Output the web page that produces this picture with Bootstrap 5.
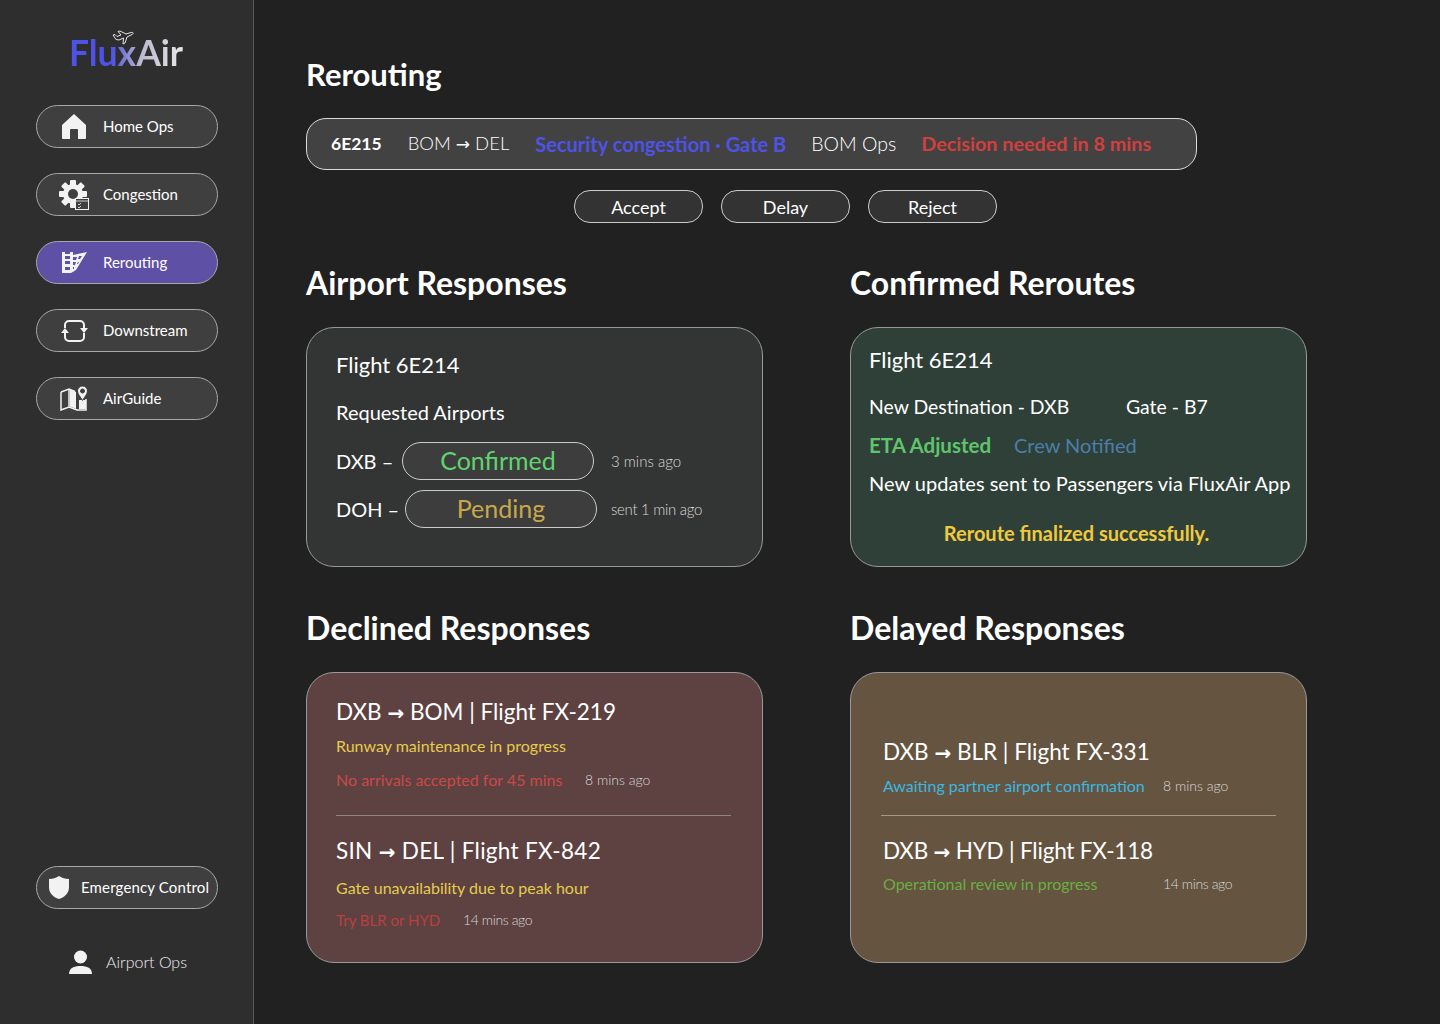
<!DOCTYPE html>
<html lang="en"><head><meta charset="utf-8"><title>FluxAir</title>
<link href="https://cdn.jsdelivr.net/npm/bootstrap@5.3.0/dist/css/bootstrap.min.css" rel="stylesheet">
<style>
html,body{height:100%}
body{background:#212121;color:#fff;font-family:"Lato","Liberation Sans",sans-serif}
.shell{height:1024px;overflow:hidden}
.side{width:254px;flex:none;background:#2e2e2e;border-right:1px solid #5a5a5a;height:1024px;padding:30px 35px 0 36px}
.logo{height:75px;position:relative;text-align:center;padding:1px 2px 0 0}
.logo-txt{font-size:35.5px;font-weight:700;line-height:44px;display:inline-block;background:linear-gradient(90deg,#4f52e6 0,#4f52e6 38%,#b9b7cc 62%,#e8e8e8 100%);-webkit-background-clip:text;background-clip:text;color:transparent}
.logo svg{position:absolute;left:76px;top:0}
.pill{height:43px;border:1px solid #a8a8a8;border-radius:22px;background:#3f3f3f;color:#fff;font-size:15px;text-decoration:none;display:flex;align-items:center;white-space:nowrap}
.pill.on{background:#5e50a4}
.ico{width:66px;padding-left:8px;display:flex;justify-content:center;flex:none}
.ico-sm{width:44px;padding-left:0}
.navs{display:flex;flex-direction:column;gap:25px}
.side-low{margin-top:446px}
.wide-txt{letter-spacing:.15px}
.who{margin-top:41px;font-size:16px;font-weight:300;color:#f0f0f0;padding-left:33px;gap:14px}
.mainp{padding:52px 0 0 52px;flex:1}
.h-a{font-size:32px;font-weight:700;line-height:44px;margin:0}
.h-top{font-size:31px}
.bar{margin-top:22px;width:891px;height:52px;border:1px solid #ddd;border-radius:20px;background:#424242;padding-left:24px;gap:26px}
.bar>*{white-space:nowrap}
.b-id{font-size:17.5px;font-weight:700}
.b-route{font-size:18.5px;font-weight:300;color:#fff}
.b-ops{font-size:19.5px;font-weight:300;margin-left:-1px}
.b-sec{font-size:20px;font-weight:700;color:#4f52e6}
.b-dec{font-size:19.8px;font-weight:700;color:#d13f3f;margin-left:-1px}
.acts{margin:20px 0 0 268px;gap:18px}
.act{width:129px;height:33px;padding:0;border:1px solid #ccc;border-radius:16px;background:#333;color:#fff;font-size:18px;line-height:30px}
.cols{display:grid;grid-template-columns:457px 457px;column-gap:87px}
.gap-h1{margin-top:38px}
.gap-h2{margin-top:39px}
.gap-c{margin-top:22px}
.panel{border:1px solid #999;border-radius:28px;box-sizing:border-box}
.p-gray{background:#333534;height:240px;padding:20px 29px}
.p-green{background:#2f4038;height:240px;padding:15px 18px}
.p-red{background:#5e4242;height:291px;padding:22px 29px 0}
.p-brown{background:#655440;height:291px;padding:62px 32px 0}
.t-lg{font-size:22.500px;line-height:34px;white-space:nowrap}
.t-flight{font-size:22px}
.t-wide{letter-spacing:.3px}
.t-narrow{letter-spacing:-.2px}
.arr{font-family:"DejaVu Sans",sans-serif;font-weight:700;font-size:20px;line-height:0}
.arr-thin{font-family:"DejaVu Sans",sans-serif;font-size:17px;font-weight:400;line-height:0}
.t-md{font-size:20px;line-height:28px;font-weight:400}
.t-nd{font-size:19.400px}
.t-eta{font-size:20.500px}
.t-sm{font-size:16px;line-height:22px;font-weight:400}
.t-try{font-size:15px}
.t-time{font-size:14px;line-height:22px;color:#d8d8d8;font-weight:300}
.t-tight{letter-spacing:-.4px}
.t-time-g{font-size:15px}
.st{height:38px;border:1px solid #ccc;border-radius:19px;background:#3d3d3d;width:192px;text-align:center;font-size:25px;line-height:35px}
.st-ok{color:#5fd46f}.st-pend{color:#c9a84a}
.lab-dxb{width:66px}.lab-doh{width:69px}
.row-a{margin-top:16px}.row-b{margin-top:10px}
.time-a{margin-left:17px}.time-b{margin-left:14px;letter-spacing:-.3px}
.g-1{margin-top:16px}.g-2{margin-top:10px}.g-3{margin-top:22px}
.w-dest{width:257px}.w-eta{width:145px}
.c-eta{color:#5fc46b}.c-crew{color:#4a7fa8}.c-final{color:#f0c93f;margin-left:-4px}
.c-yel{color:#e4cc4c}.c-red{color:#cc4848}.c-red2{color:#b84040}
.c-blue{color:#3bb8e0}.c-grn{color:#6aae45}
.w-no{width:249px}.w-try{width:127px}.w-del{width:280px}
.s-5{margin-top:5px}.s-6{margin-top:6px}.s-7{margin-top:9px}.s-10{margin-top:10px}.s-12{margin-top:12px}
.rule{height:1px;background:#8a8a78;border:0;opacity:1;width:395px}
.rule-r{margin:24px 0 18px}
.rule-b{margin:18px 0 18px -2px;background:#a09a88}
</style></head>
<body>
<div class="d-flex shell">
<aside class="side">
 <div class="logo">
  <span class="logo-txt">FluxAir</span>
  <svg width="22" height="16" viewBox="0 0 22 16" fill="none" stroke="#e4e4e4" stroke-width="1" stroke-linejoin="round"><path d="M1 5l2-.5 2 2 4-1.500L6 1.500 8 1l6 3 5-1.500c2.500-.5 3 1 1 2l-5 2.500-2 6-2 1 .5-6-4.500 2-3-.5z"/></svg>
 </div>
 <nav class="navs">
  <a class="pill" href="#"><span class="ico"><svg width="24" height="25" viewBox="0 0 24 25" fill="#f2f2f2"><path d="M12 0L24 11V24a1 1 0 0 1-1 1H16V16a1 1 0 0 0-1-1H9a1 1 0 0 0-1 1v9H1a1 1 0 0 1-1-1V11z"/></svg></span>Home Ops</a>
  <a class="pill" href="#"><span class="ico"><svg width="30" height="30" viewBox="0 0 30 30"><g fill="#f2f2f2"><rect x="11" y="0" width="6" height="28" rx="1"/><rect x="0" y="11" width="28" height="6" rx="1"/><rect x="11" y="0" width="6" height="28" rx="1" transform="rotate(45 14 14)"/><rect x="11" y="0" width="6" height="28" rx="1" transform="rotate(-45 14 14)"/><circle cx="14" cy="14" r="10"/></g><circle cx="14" cy="14" r="5" fill="#3f3f3f"/><rect x="16.500" y="18.500" width="13" height="11" fill="#3f3f3f" stroke="#f2f2f2"/><path d="M17 21h12M19 24l1 1 2-2M19 27l1 1 2-2" stroke="#f2f2f2" fill="none" stroke-width=".8"/></svg></span>Congestion</a>
  <a class="pill on" href="#"><span class="ico"><svg width="25" height="21" viewBox="0 0 25 21"><path fill="#f2f2f2" d="M0 0h3v2h5V0h3v3l14-3-11 18-5 3H0z"/><path fill="#5e50a4" d="M3 4h5v3H3zM3 9h5v3H3zM3 15h5v3H3zM11 5h4l-1 3h-3zM17 4h3l-2 3h-2zM11 10h3l-1 3h-2zM16 10h1l-1 2h-1zM11 15h1v2h-1z"/></svg></span>Rerouting</a>
  <a class="pill" href="#"><span class="ico"><svg width="27" height="24" viewBox="0 0 27 24" fill="none" stroke="#f2f2f2" stroke-width="2"><path d="M4 9V6a4 4 0 0 1 4-4h11a4 4 0 0 1 4 4v4"/><path d="M23 14v4a4 4 0 0 1-4 4H8a4 4 0 0 1-4-4v-4"/><path fill="#f2f2f2" stroke="none" d="M19 9h8l-4 5zM0 14h8l-4-5z"/></svg></span>Downstream</a>
  <a class="pill" href="#"><span class="ico"><svg width="28" height="25" viewBox="0 0 28 25" fill="none" stroke="#f2f2f2" stroke-width="1.500"><path d="M1 6l8-3 6 2.500M1 6v18l8-3 8 3h9V13M9 3v18"/><path fill="#f2f2f2" d="M10 3.500l6 2.500v17l-6-2.500zM19 14h7v9h-7z" stroke="none"/><path fill="#f2f2f2" stroke="#3f3f3f" stroke-width="1" fill-rule="evenodd" d="M22.500 0a5 5 0 0 1 5 5c0 3-3 6-5 9.500-2-3.500-5-6.500-5-9.500a5 5 0 0 1 5-5zm0 3a2 2 0 1 0 0 4 2 2 0 0 0 0-4z"/></svg></span>AirGuide</a>
 </nav>
 <div class="side-low">
  <a class="pill wide-txt" href="#"><span class="ico ico-sm"><svg width="20" height="23" viewBox="0 0 20 23" fill="#f2f2f2"><path d="M10 0c3 2 6 3 10 3v8c0 6-4 10-10 12C4 21 0 17 0 11V3c4 0 7-1 10-3z"/></svg></span>Emergency Control</a>
  <div class="who d-flex align-items-center"><svg width="23" height="24" viewBox="0 0 23 24" fill="#f2f2f2"><circle cx="11.500" cy="7" r="6.500"/><path d="M0 24c0-6 5-8 11.500-8S23 18 23 24z"/></svg>Airport Ops</div>
 </div>
</aside>
<main class="mainp">
 <h1 class="h-a h-top">Rerouting</h1>
 <div class="bar d-flex align-items-center">
  <span class="b-id">6E215</span><span class="b-route">BOM <span class="arr-thin">→</span> DEL</span><span class="b-sec">Security congestion · Gate B</span><span class="b-ops">BOM Ops</span><span class="b-dec">Decision needed in 8 mins</span>
 </div>
 <div class="acts d-flex"><button class="act btn">Accept</button><button class="act btn">Delay</button><button class="act btn">Reject</button></div>
 <div class="cols gap-h1">
  <h2 class="h-a">Airport Responses</h2><h2 class="h-a">Confirmed Reroutes</h2>
 </div>
 <div class="cols gap-c">
  <section class="panel p-gray">
   <div class="t-lg t-flight">Flight 6E214</div>
   <div class="t-md g-1">Requested Airports</div>
   <div class="d-flex align-items-center row-a"><span class="t-md lab-dxb">DXB –</span><div class="st st-ok">Confirmed</div><span class="t-time t-time-g time-a">3 mins ago</span></div>
   <div class="d-flex align-items-center row-b"><span class="t-md lab-doh">DOH –</span><div class="st st-pend">Pending</div><span class="t-time t-time-g time-b">sent 1 min ago</span></div>
  </section>
  <section class="panel p-green">
   <div class="t-lg t-flight">Flight 6E214</div>
   <div class="t-md t-nd d-flex g-1"><span class="w-dest">New Destination - DXB</span><span>Gate - B7</span></div>
   <div class="t-md d-flex g-2"><span class="fw-bold t-eta w-eta c-eta">ETA Adjusted</span><span class="c-crew">Crew Notified</span></div>
   <div class="t-md g-2 text-nowrap">New updates sent to Passengers via FluxAir App</div>
   <div class="t-md fw-bold text-center g-3 c-final">Reroute finalized successfully.</div>
  </section>
 </div>
 <div class="cols gap-h2">
  <h2 class="h-a">Declined Responses</h2><h2 class="h-a">Delayed Responses</h2>
 </div>
 <div class="cols gap-c">
  <section class="panel p-red">
   <div class="t-lg">DXB <span class="arr">→</span> BOM | Flight FX-219</div>
   <div class="t-sm s-6 c-yel">Runway maintenance in progress</div>
   <div class="d-flex s-12"><span class="t-sm c-red w-no">No arrivals accepted for 45 mins</span><span class="t-time">8 mins ago</span></div>
   <hr class="rule rule-r">
   <div class="t-lg t-wide">SIN <span class="arr">→</span> DEL | Flight FX-842</div>
   <div class="t-sm s-7 c-yel">Gate unavailability due to peak hour</div>
   <div class="d-flex s-10"><span class="t-sm t-try c-red2 w-try">Try BLR or HYD</span><span class="t-time t-tight">14 mins ago</span></div>
  </section>
  <section class="panel p-brown">
   <div class="t-lg">DXB <span class="arr">→</span> BLR | Flight FX-331</div>
   <div class="d-flex s-6"><span class="t-sm c-blue w-del">Awaiting partner airport confirmation</span><span class="t-time">8 mins ago</span></div>
   <hr class="rule rule-b">
   <div class="t-lg t-narrow">DXB <span class="arr">→</span> HYD | Flight FX-118</div>
   <div class="d-flex s-5"><span class="t-sm c-grn w-del">Operational review in progress</span><span class="t-time t-tight">14 mins ago</span></div>
  </section>
 </div>
</main>
</div>
<script src="https://cdn.jsdelivr.net/npm/bootstrap@5.3.0/dist/js/bootstrap.bundle.min.js"></script>
</body></html>
